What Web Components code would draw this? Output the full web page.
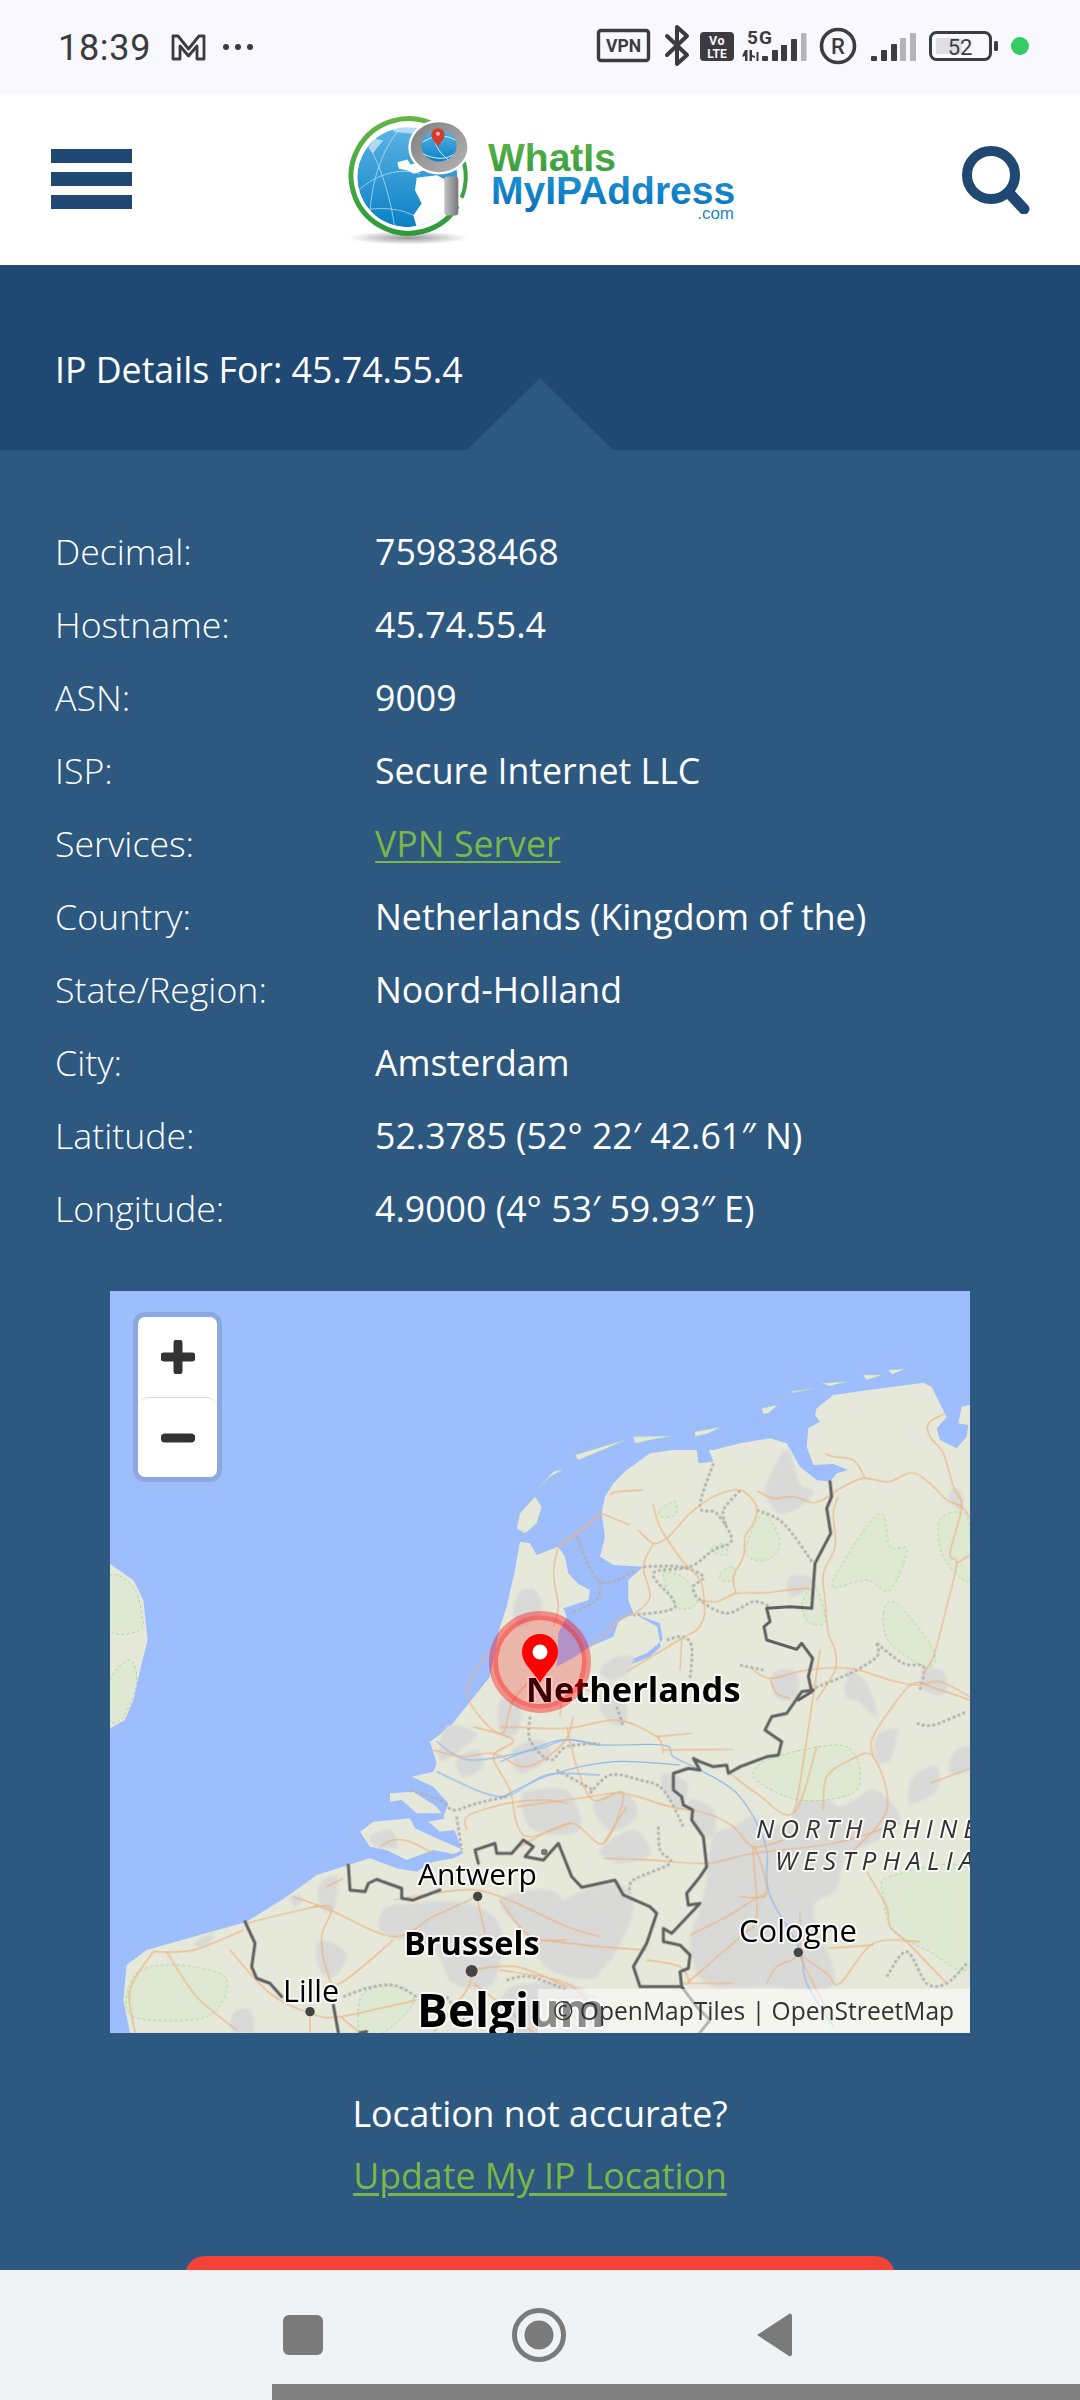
<!DOCTYPE html>
<html lang="en"><head><meta charset="utf-8"><title>IP Details</title>
<style>
html,body{margin:0;padding:0;width:1080px;height:2400px;overflow:hidden;background:#2d5880}
body{display:flex;flex-direction:column;font-family:"Open Sans",sans-serif}
ip-content{flex:1;min-height:0}
</style></head>
<body>
<status-bar></status-bar>
<site-header></site-header>
<ip-hero>IP Details For: 45.74.55.4</ip-hero>
<ip-content>
  <ip-row label="Decimal:">759838468</ip-row>
  <ip-row label="Hostname:">45.74.55.4</ip-row>
  <ip-row label="ASN:">9009</ip-row>
  <ip-row label="ISP:">Secure Internet LLC</ip-row>
  <ip-row label="Services:" link>VPN Server</ip-row>
  <ip-row label="Country:">Netherlands (Kingdom of the)</ip-row>
  <ip-row label="State/Region:">Noord-Holland</ip-row>
  <ip-row label="City:">Amsterdam</ip-row>
  <ip-row label="Latitude:">52.3785 (52° 22′ 42.61″ N)</ip-row>
  <ip-row label="Longitude:">4.9000 (4° 53′ 59.93″ E)</ip-row>
  <map-panel></map-panel>
  <location-note></location-note>
  <cta-peek></cta-peek>
</ip-content>
<nav-bar></nav-bar>

<script>
function def(name, html, init){
  customElements.define(name, class extends HTMLElement{
    constructor(){super();const r=this.attachShadow({mode:'open'});r.innerHTML=typeof html==='function'?html(this):html;}
    connectedCallback(){ if(init) init(this); }
  });
}
def('status-bar',`<style>
:host{display:flex;align-items:center;height:94px;background:#f8f8fe;color:#3c3c40;box-sizing:border-box;padding:0 51px 0 58px;flex:none}
.t{font:400 36px/1 Roboto,sans-serif;letter-spacing:.7px;margin-right:20px;position:relative;top:1px}
.sp{flex:1}
svg{display:block}
</style>
<span class="t">18:39</span>
<svg width="35" height="28" viewBox="0 0 35 28" style="margin-right:16px"><path d="M2 26V3h5l10.500 13L28 3h5v23h-7V13l-8.500 10L9 13v13z" fill="none" stroke="#3c3c40" stroke-width="2.800" stroke-linejoin="round"/></svg>
<svg width="32" height="10" viewBox="0 0 32 10"><circle cx="4" cy="5" r="3" fill="#3c3c40"/><circle cx="16" cy="5" r="3" fill="#3c3c40"/><circle cx="28" cy="5" r="3" fill="#3c3c40"/></svg>
<span class="sp"></span>
<svg width="439" height="70" viewBox="590 20 439 70" fill="#3c3c40">
 <rect x="598.500" y="38.500" width="50" height="30" rx="2.500" fill="none" stroke="#3c3c40" stroke-width="3.400"/>
 <text x="623.500" y="60" text-anchor="middle" font-family="Roboto,sans-serif" font-weight="700" font-size="17.500">VPN</text>
 <path d="M667 44l20 19-10 9V35l10 9-20 19" fill="none" stroke="#3c3c40" stroke-width="4" stroke-linejoin="round" stroke-linecap="round"/>
 <rect x="700" y="40" width="34" height="29" rx="4"/>
 <text x="717" y="53" text-anchor="middle" font-family="Roboto,sans-serif" font-weight="700" font-size="12.500" fill="#f8f8fe" letter-spacing=".5">Vo</text>
 <text x="717" y="66" text-anchor="middle" font-family="Roboto,sans-serif" font-weight="700" font-size="12" fill="#f8f8fe">LTE</text>
 <text x="760" y="52" text-anchor="middle" font-family="Roboto,sans-serif" font-weight="700" font-size="19" letter-spacing="1">5G</text>
 <path d="M745 58h2.500v11H745v-5l-2.500 1v-2zM749.500 58h2.500v5l3 1v2l-3-1v4h-2.500z M756.500 60h2v9h-2z"/>
 <rect x="762" y="64" width="6" height="5" rx="1"/><rect x="772" y="58" width="6" height="11" rx="1"/><rect x="781" y="53" width="6" height="16" rx="1"/><rect x="791" y="47" width="6" height="22" rx="1"/><rect x="801" y="41" width="5.500" height="28" rx="1" fill="#b4b4b8"/>
 <circle cx="838" cy="54" r="16.500" fill="none" stroke="#3c3c40" stroke-width="3.600"/>
 <text x="838" y="62" text-anchor="middle" font-family="Roboto,sans-serif" font-weight="500" font-size="22">R</text>
 <rect x="871" y="64" width="6" height="5" rx="1"/><rect x="881" y="58" width="6" height="11" rx="1"/><rect x="891" y="52" width="6" height="17" rx="1"/><rect x="900" y="46" width="6" height="23" rx="1" fill="#b4b4b8"/><rect x="910" y="41" width="6" height="28" rx="1" fill="#b4b4b8"/>
 <rect x="930.500" y="40.500" width="60" height="27" rx="6" fill="none" stroke="#3c3c40" stroke-width="3"/>
 <rect x="936" y="46" width="26" height="16" rx="2" fill="#dedee6"/>
 <rect x="994" y="49" width="4" height="10" rx="1.500"/>
 <text x="960" y="63" text-anchor="middle" font-family="Roboto,sans-serif" font-size="22">52</text>
 <circle cx="1020" cy="54" r="9" fill="#33cc66"/>
</svg>`);

def('site-header',`<style>
:host{display:grid;grid-template-columns:320px 440px 1fr;height:171px;background:#fff;flex:none;align-items:center}
.h{display:flex;flex-direction:column;gap:9px;padding-left:51px;margin-top:-1px}
.h i{display:block;width:81px;height:14px;background:#1f4873}
.s{justify-self:end;margin-right:50px;margin-top:1px}
svg{display:block}
</style>
<div class="h"><i></i><i></i><i></i></div>
<svg width="440" height="170" viewBox="0 4.500 440 170">
 <defs>
  <linearGradient id="gr" x1="0" y1="0" x2="0" y2="1"><stop offset="0" stop-color="#62b548"/><stop offset="1" stop-color="#2f9a3e"/></linearGradient>
  <linearGradient id="bl" x1="0" y1="0" x2="0" y2="1"><stop offset="0" stop-color="#1d9bd8"/><stop offset="1" stop-color="#0a6fba"/></linearGradient>
  <linearGradient id="gl" x1="0" y1="0" x2="0" y2="1"><stop offset="0" stop-color="#5cb4e4"/><stop offset="1" stop-color="#0a80c6"/></linearGradient>
  <linearGradient id="hd" x1="0" y1="0" x2="1" y2="0"><stop offset="0" stop-color="#c4c4c4"/><stop offset="1" stop-color="#777"/></linearGradient>
  <linearGradient id="mg" x1="0" y1="0" x2="1" y2="1"><stop offset="0" stop-color="#808080"/><stop offset="1" stop-color="#b4b4b4"/></linearGradient>
  <radialGradient id="sh"><stop offset="0" stop-color="#999"/><stop offset="1" stop-color="#fff"/></radialGradient>
  <clipPath id="gc"><circle cx="262" cy="260" r="150"/></clipPath>
 </defs>
 <g transform="scale(.33333)">
  <ellipse cx="265" cy="442" rx="180" ry="20" fill="url(#sh)"/>
  <path d="M345 104A172 172 0 1 0 412 346" fill="none" stroke="url(#gr)" stroke-width="15"/>
  <path d="M432 215A172 172 0 0 1 425 322" fill="none" stroke="#3ea344" stroke-width="12"/>
  <g clip-path="url(#gc)">
   <circle cx="262" cy="260" r="150" fill="url(#gl)"/>
   <path d="M205 108c40-8 70-4 90 10l-20 12-50-6zM145 170l20-25 25 4-18 22-14 18z" fill="#fff" opacity=".55"/>
   <path d="M232 215l30-8 10 15 25-6 25 20-40 14-20-10-25-5zM290 262l60-8 40 20 20 150-110 20-20-70 25-35-20-40z" fill="#fff"/>
   <path d="M115 300C170 250 240 230 300 250M155 180c30 60 60 150 70 240M235 120c-50 60-90 170-85 290M120 360c70-10 120-10 180 25" fill="none" stroke="#cfe9f7" stroke-width="2"/>
  </g>
  <ellipse cx="357" cy="170" rx="92" ry="82" fill="#fff"/>
  <ellipse cx="357" cy="170" rx="85" ry="75" fill="url(#mg)"/>
  <ellipse cx="357" cy="165" rx="53" ry="48" fill="url(#gl)"/>
  <path d="M308 155c30-20 70-25 98-6M310 190c30 15 65 20 90 2M345 120c-5 40 10 65 40 88" fill="none" stroke="#d8effa" stroke-width="3"/>
  <rect x="373" y="258" width="42" height="117" rx="9" fill="url(#hd)"/>
  <path d="M354 170c-6-13-20-24-20-37a20 20 0 0 1 40 0c0 13-14 24-20 37z" fill="#d63a2a"/><circle cx="354" cy="130" r="6" fill="#f2b8a8"/>
 </g>
 <text x="168" y="80" font-family="'Liberation Sans',sans-serif" font-weight="700" font-size="39" fill="url(#gr)">WhatIs</text>
 <text x="171" y="113" font-family="'Liberation Sans',sans-serif" font-weight="700" font-size="39" fill="url(#bl)">MyIPAddress</text>
 <text x="414" y="128" text-anchor="end" font-family="'Liberation Sans',sans-serif" font-size="17" fill="#1d86cc">.com</text>
</svg>
<svg class="s" width="68" height="68" viewBox="0 0 68 68"><circle cx="29" cy="29" r="24" fill="none" stroke="#1f4873" stroke-width="10"/><path d="M47 47l15 16" stroke="#1f4873" stroke-width="11" stroke-linecap="round"/></svg>`);

def('ip-hero',`<style>
:host{display:flex;align-items:center;position:relative;height:185px;box-sizing:border-box;padding:24px 55px 0;background:#1f4873;color:#fff;flex:none;font:400 35.7px/1.4 "Open Sans",sans-serif}
.tri{position:absolute;left:467px;bottom:0;width:0;height:0;border-left:73px solid transparent;border-right:73px solid transparent;border-bottom:72px solid #2d5880}
</style><slot></slot><span class="tri"></span>`);

def('ip-content',`<style>
:host{display:block;background:#2d5880;padding-top:65px;overflow:hidden}
</style><slot></slot>`);

def('ip-row',(el)=>`<style>
:host{display:grid;grid-template-columns:320px 1fr;height:73px;align-items:center;padding-left:55px;color:#fff;font:400 35.7px/1.4 "Open Sans",sans-serif}
.l{font-weight:300}
:host([link]) .v{color:#7ab648;text-decoration:underline;text-decoration-thickness:2px;text-underline-offset:4px}
</style><span class="l"></span><span class="v"><slot></slot></span>`,(el)=>{el.shadowRoot.querySelector('.l').textContent=el.getAttribute('label')});

const Z4='translate(1200,0)',Z5='translate(0,1110)',Z6='translate(1200,1110)';
function smooth(pts,closed){
  const n=pts.length,g=i=>closed?pts[(i+n)%n]:pts[Math.max(0,Math.min(n-1,i))];
  let d=`M${pts[0][0]} ${pts[0][1]}`;
  const m=closed?n:n-1;
  for(let i=0;i<m;i++){
    const p0=g(i-1),p1=g(i),p2=g(i+1),p3=g(i+2);
    d+=`C${(p1[0]+(p2[0]-p0[0])/6).toFixed(1)} ${(p1[1]+(p2[1]-p0[1])/6).toFixed(1)} ${(p2[0]-(p3[0]-p1[0])/6).toFixed(1)} ${(p2[1]-(p3[1]-p1[1])/6).toFixed(1)} ${p2[0]} ${p2[1]}`;
  }
  return d+(closed?'Z':'');
}
def('map-panel',`<style>
:host{display:block;position:relative;width:860px;height:742px;margin:46px 0 0 110px;overflow:hidden;background:#9ebdfd}
svg{display:block;position:absolute;inset:0}
.zoom{position:absolute;left:23px;top:21px;width:79px;height:160px;border:5px solid #8ba9e0;border-radius:12px;background:#fff;display:grid;grid-template-rows:80px 80px;overflow:hidden}
.zoom div{display:flex;align-items:center;justify-content:center;border-radius:10px}
.zoom div+div{border-top:1.5px solid #ddd;box-sizing:border-box}
.attr{position:absolute;right:0;bottom:0;width:432px;height:44px;box-sizing:border-box;background:rgba(255,255,255,.55);color:#333;font:400 24.6px/44px "Open Sans",sans-serif;padding-left:15px;white-space:nowrap}
text{font-family:"Open Sans",sans-serif;fill:#000;paint-order:stroke;stroke:rgba(255,255,255,.75);stroke-width:4px;stroke-linejoin:round}
</style>
<svg width="860" height="742" viewBox="110 1291 860 742">
<defs><filter id="soft" x="-5%" y="-5%" width="110%" height="110%"><feGaussianBlur stdDeviation="2.500"/></filter></defs>
<g transform="translate(100 1280) scale(.33333)">
 <!-- land -->
 <g fill="#e6e8da">
  <polygon points="2610,375 2585,380 2575,430 2605,435 2600,470 2570,505 2520,480 2510,445 2540,412 2495,320 2470,308 2290,332 2200,345 2150,385 2145,405 2160,425 2125,445 2120,500 2140,555 2200,552 2245,570 2210,580 2190,605 2150,600 2100,560 2060,490 2010,475 1920,490 1840,510 1720,510 1650,520 1580,570 1540,610 1515,650 1505,700 1375,800 1310,825 1290,790 1260,785 1245,870 1220,980 1200,1040 1170,1190 1050,1340 990,1385 1010,1450 1000,1475 935,1490 1000,1520 1045,1570 1030,1610 1065,1655 1090,1720 1060,1735 1000,1745 950,1775 890,1765 810,1735 745,1755 650,1785 560,1850 440,1925 280,1970 140,2010 80,2055 70,2160 90,2258 2610,2258"/>
  <polygon points="30,852 100,900 130,960 143,1080 125,1150 100,1260 75,1320 30,1345"/>
  <g transform="${Z4}" stroke="#a5dc9a" stroke-width="2" stroke-dasharray="7 6">
   <polygon points="105,650 125,680 110,730 75,760 50,745 60,700"/>
   <polygon points="190,568 160,575 115,625 150,590"/>
   <polygon points="375,480 225,525 235,540 320,505"/>
   <polygon points="400,470 515,468 450,480 405,490"/>
   <polygon points="585,455 660,442 625,460 585,470"/>
   <polygon points="785,385 833,375 805,400 790,402"/>
   <polygon points="870,335 940,325 880,338"/>
   <polygon points="965,310 1038,305 990,318"/>
   <polygon points="1090,285 1145,285 1100,300"/>
   <polygon points="1165,270 1215,268 1175,283"/>
  </g>
  <g transform="${Z5}">
   <polygon points="780,545 820,515 930,505 945,535 1000,560 1090,600 1060,612 1000,600 920,630 860,600 810,590"/>
   <polygon points="870,430 940,425 1010,470 1025,490 950,490 905,450 870,455"/>
   <polygon points="985,515 1040,505 1065,540 1020,545"/>
  </g>
 </g>
 <!-- inland water -->
 <g transform="${Z4}" fill="#9ebdfd">
  <polygon points="305,700 175,800 195,830 205,880 235,912 270,930 265,960 190,985 200,1010 175,1060 170,1160 225,1130 270,1100 340,1070 355,1025 400,1000 385,960 385,900 430,860 340,855 300,830 315,770"/>
  <polygon points="405,1002 480,1030 488,1080 440,1120 365,1150 362,1180 375,1160 450,1130 482,1100 472,1040"/>
  <polygon points="590,510 625,505 640,545 595,550"/>
 </g>
 <!-- urban -->
 <g fill="#d9d9d7" class="s" filter="url(#soft)">
  <g transform="${Z4}">
   <polygon points="40,990 60,935 105,930 125,995 60,1040"/>
   <polygon points="800,610 860,510 900,610 940,635 900,680 840,700 800,650"/>
   <polygon points="860,920 875,888 930,890 930,920 880,950"/>
   <polygon points="1345,650 1370,625 1390,660 1380,690"/>
   <polygon points="820,1180 885,1175 890,1250 830,1255"/>
   <polygon points="300,1170 340,1135 400,1130 380,1180 330,1200"/>
   <polygon points="1035,1215 1080,1190 1100,1250 1050,1260"/>
   <polygon points="1270,1170 1330,1175 1335,1240 1270,1230"/>
  </g>
  <g transform="${Z5}">
   <polygon points="660,700 710,680 700,780 660,770"/>
   <polygon points="850,780 940,760 1100,760 1200,830 1180,1000 1060,1000 1000,900 850,850"/>
   <polygon points="280,880 340,850 320,890"/>
   <polygon points="1270,430 1400,430 1440,540 1300,540"/>
   <polygon points="1200,750 1350,720 1420,800 1500,850 1490,980 1350,960 1280,860"/>
   <polygon points="1040,230 1130,250 1080,300 1020,330"/>
   <polygon points="1240,300 1320,270 1350,320 1260,370"/>
   <polygon points="810,560 870,540 890,590 830,590"/>
   <polygon points="1070,330 1130,300 1150,350 1090,380"/>
   <polygon points="400,1090 450,1080 460,1148 400,1148"/>
   <polygon points="650,880 700,880 740,920 700,980 660,960"/>
   <polygon points="1220,1020 1400,1000 1500,1060 1500,1148 1240,1148"/>
   <polygon points="570,740 610,740 590,770"/>
  </g>
  <g transform="${Z6}">
   <polygon points="620,690 640,560 700,530 760,500 860,520 920,400 1020,470 1120,420 1200,500 1150,560 1040,620 1010,720 940,780 1000,1000 800,1010 620,1000 570,880 600,780"/>
   <polygon points="300,600 400,540 450,610 360,640"/>
   <polygon points="80,440 200,420 230,530 100,520"/>
   <polygon points="280,460 380,430 410,500 330,540"/>
   <polygon points="180,760 340,700 400,780 300,960 200,830"/>
   <polygon points="490,370 560,400 540,480 490,420"/>
   <polygon points="1130,260 1190,240 1170,330 1130,330"/>
   <polygon points="1240,380 1310,350 1310,420 1230,460"/>
   <polygon points="1360,310 1410,290 1410,360 1350,370"/>
   <polygon points="570,450 640,480 640,560 580,530"/>
   <polygon points="830,70 890,70 885,145 825,130"/>
   <polygon points="1040,60 1100,100 1130,200 1060,130"/>
   <polygon points="0,150 60,170 50,250 0,250"/>
   <polygon points="320,100 380,170 360,230 300,180"/>
  </g>
 </g>
 <!-- forests -->
 <g fill="#dfe8d2" stroke="#a5dc9a" stroke-width="3" stroke-dasharray="9 7" class="s">
  <g transform="${Z4}">
   <polygon points="740,790 790,700 840,790 800,840 745,830"/>
   <polygon points="1000,920 1040,830 1140,700 1170,800 1220,810 1170,930 1100,900"/>
   <polygon points="1150,1000 1190,970 1300,1110 1280,1160 1170,1090"/>
   <polygon points="1320,720 1400,710 1410,900 1330,830"/>
   <polygon points="480,690 525,665 525,705 485,710"/>
   <polygon points="490,880 560,900 590,970 530,980"/>
   <polygon points="660,880 700,860 700,900 665,900"/>
   <polygon points="630,810 670,790 680,825"/>
   <polygon points="905,975 945,920 975,1020 930,1030"/>
  </g>
  <g transform="${Z5}">
   <polygon points="100,1100 90,1000 150,950 280,950 380,990 320,1100"/>
   <polygon points="780,1148 790,1030 900,1010 940,1060 850,1148"/>
  </g>
  <g transform="${Z6}">
   <polygon points="1170,680 1410,660 1410,950 1280,900 1180,840 1150,740"/>
   <polygon points="830,320 1040,290 1070,420 900,450 760,380"/>
  </g>
  <polygon points="30,890 100,920 125,1000 120,1050 30,1050"/>
  <polygon points="30,1200 90,1140 110,1210 70,1310 30,1320"/>
 </g>
 <!-- rivers -->
 <g transform="${Z6}" fill="none" stroke="#8fb8ee" stroke-width="3.500" class="s">
  <polyline points="0,335 180,270 300,285 490,285 520,320 600,360 700,420 760,500 800,600 800,690 820,760 900,900 920,1000 1000,1130"/>
  <polyline points="0,445 150,375 340,335 540,345"/>
 </g>
 <g transform="${Z5}" fill="none" stroke="#8fb8ee" stroke-width="3.500" class="s">
  <polyline points="1010,275 1110,330 1300,300 1400,270 1500,285"/>
  <polyline points="1010,365 1200,440 1340,375 1500,375"/>
 </g>
 <!-- regional dotted boundaries -->
 <g fill="none" stroke="#aeb0ae" stroke-width="8" stroke-dasharray="9 7" class="s">
  <g transform="${Z4}">
   <polyline points="640,550 600,680 650,700 695,780 640,810 570,860 460,880 520,960 510,990 400,1005"/>
   <polyline points="720,632 670,690 680,740"/>
   <polyline points="770,690 850,730 940,850"/>
   <polyline points="230,770 300,905 410,870"/>
   <polyline points="300,905 290,960 210,1000"/>
   <polyline points="430,860 540,860 610,890 580,920 600,960 680,1000 760,965 810,980"/>
   <polyline points="500,1080 545,1070 575,1100 570,1200"/>
   <polyline points="1130,1090 1130,1130 1050,1180 940,1225"/>
   <polyline points="1130,1090 1210,1150 1270,1160 1260,1230"/>
   <polyline points="720,1155 790,1170"/>
  </g>
  <g transform="${Z6}">
   <polyline points="270,430 330,375 420,390 490,420 550,530"/>
   <polyline points="475,530 480,600 510,640 400,690 390,730"/>
   <polyline points="1250,220 1300,225 1400,185"/>
   <polyline points="1160,980 1220,905 1280,1000 1340,1000 1400,940"/>
   <polyline points="350,170 370,230"/>
  </g>
  <g transform="${Z5}">
   <polyline points="1290,200 1290,270 1350,330 1400,290 1500,280"/>
   <polyline points="1370,360 1480,420"/>
   <polyline points="930,420 1020,450 1060,480 1130,460 1220,440"/>
   <polyline points="1070,500 1085,600"/>
   <polyline points="730,1040 800,1015 880,1005 950,1040"/>
   <polyline points="1040,1040 1100,1120"/>
   <polyline points="1220,990 1290,980 1400,1020"/>
  </g>
 </g>
 <!-- roads -->
 <g fill="none" stroke="#ebb482" stroke-width="3.500" stroke-linejoin="round" class="s">
  <g transform="${Z4}">
   <polyline points="330,645 350,635 430,630"/>
   <polyline points="305,700 390,735"/>
   <polyline points="175,800 230,760 305,700" stroke-width="5"/>
   <polyline points="458,670 475,730 500,775 545,840 600,900 612,960 612,1010 590,1050 545,1075 380,1175"/>
   <polyline points="415,750 460,790 500,775 525,750 570,700 640,650 720,630 770,680 760,730 735,770 730,830 700,890 708,940"/>
   <polyline points="460,790 430,860 450,950 405,1000 365,1015 270,1100"/>
   <polyline points="600,960 650,965 710,940 800,938 860,930 930,925"/>
   <polyline points="175,800 160,880 175,980 160,1040"/>
   <polyline points="770,632 820,655 880,650 940,668 985,650 1020,625 1090,595 1165,605 1235,578 1290,610 1340,660 1385,680 1410,715"/>
   <polyline points="975,520 1000,530 1060,540 1095,595"/>
   <polyline points="1015,650 1000,700 1005,800 970,880 975,960 985,1060 1005,1110 1005,1170 950,1260"/>
   <polyline points="1335,400 1285,430 1290,470 1330,520 1360,620 1385,680 1350,820 1370,850 1340,980 1300,1130 1270,1180"/>
   <polyline points="1370,850 1410,825"/>
   <polyline points="755,1165 810,1195 920,1170 1050,1165 1170,1200 1250,1215 1320,1205 1410,1250"/>
   <polyline points="545,1075 540,1170"/>
   <polyline points="810,1195 830,1240 870,1255"/>
  </g>
  <g transform="${Z6}">
   <polyline points="0,230 200,235 350,210 470,260 490,310"/>
   <polyline points="470,260 575,250"/>
   <polyline points="490,300 700,298"/>
   <polyline points="50,470 270,440 370,430 510,470 620,490 700,530 760,590 850,570"/>
   <polyline points="310,625 450,630 620,640 760,610 1000,580 1200,520"/>
   <polyline points="570,855 680,800 775,740 800,730"/>
   <polyline points="690,370 770,430 880,490 950,290"/>
   <polyline points="880,490 900,400 960,0"/>
   <polyline points="970,480 980,380 1050,330 1120,320 1160,480 1040,620"/>
   <polyline points="1120,320 1115,270 1170,180 1240,100 1320,120 1410,150"/>
   <polyline points="1290,400 1410,355"/>
   <polyline points="60,590 210,520 310,580 370,430 280,450 230,350 200,230"/>
   <polyline points="200,870 90,860 0,750"/>
   <polyline points="310,580 380,470"/>
   <polyline points="720,740 800,730 760,590 770,800 720,860 560,1000"/>
   <polyline points="900,790 895,910 830,950 800,1000"/>
   <polyline points="895,910 980,970 1020,1000 1120,880 1260,875"/>
   <polyline points="1100,665 1160,770 1170,830 1225,880 1340,1000"/>
   <polyline points="980,895 1120,885"/>
   <polyline points="895,910 990,1100"/>
   <polyline points="540,1000 700,1000"/>
   <polyline points="440,930 540,950 570,1000"/>
   <polyline points="0,960 200,1000 300,1100"/>
   <polyline points="120,870 300,890 440,900"/>
  </g>
  <g transform="${Z5}">
   <polyline points="1120,230 1240,270 1180,320 1230,420 1250,520 1290,560 1410,520"/>
   <polyline points="1000,300 1090,320 1180,310 1280,350 1390,280 1420,200"/>
   <polyline points="1100,540 1100,500 1180,470 1250,455 1340,450 1400,460"/>
   <polyline points="880,750 1000,730 1130,720 1250,760 1400,830 1500,860"/>
   <polyline points="580,740 690,780 880,860 1000,800 1130,740"/>
   <polyline points="680,710 730,685"/>
   <polyline points="440,820 560,790 690,770 665,860 680,960 720,1000 880,870"/>
   <polyline points="160,905 280,900 430,840"/>
   <polyline points="390,900 510,1030 630,1090 720,1100 950,1050"/>
   <polyline points="160,905 90,1020 105,1148"/>
   <polyline points="200,905 290,1040 410,1140"/>
   <polyline points="1130,740 1155,850"/>
   <polyline points="1115,960 1250,950 1400,1010"/>
   <polyline points="1120,1000 1200,1060 1300,1148"/>
   <polyline points="840,590 880,570 930,575 1000,610"/>
   <polyline points="1000,1148 1100,1020 1115,960"/>
   <polyline points="630,1090 630,1148"/>
   <polyline points="720,1100 780,1148"/>
   <polyline points="1380,200 1400,100 1500,140"/>
   <polyline points="1170,0 1100,130 1200,250 1240,150 1320,60"/>
  </g>
 </g>
 <!-- national borders -->
 <g fill="none" stroke="#606060" stroke-width="9" stroke-linejoin="round" stroke-linecap="round">
  <polyline transform="${Z4}" points="990,605 995,650 980,685 992,760 945,850 935,985 870,980 800,985 810,1025 792,1040 800,1080 890,1108 905,1090 938,1135 925,1190 935,1235 895,1260"/>
  <polyline transform="${Z6}" points="940,120 905,125 860,190 815,200 795,240 845,275 835,315 800,320 720,350 685,370 680,345 640,350 600,335 580,325 600,360 565,355 520,370 520,420 545,440 550,465 578,480 575,510 610,560 620,650 600,680 560,730 565,765 600,760 515,850 490,835 490,875 540,885 570,915 565,955 540,965 545,1010 450,1010 420,1010 400,950 440,880 470,790 450,770 370,735 345,690 245,712 215,680 175,580 130,630 75,620 100,590 70,570 35,610 -10,610 -15,580 -75,600 -65,640"/>
  <polyline transform="${Z5}" points="1020,720 940,750 905,745 905,715 830,688 805,700 795,725 750,720 745,645"/>
  <polyline transform="${Z5}" points="435,815 465,880 455,950 470,985 510,1000 545,1040"/>
  <polyline transform="${Z5}" points="700,1065 715,1148"/>
  <polyline transform="${Z6}" points="545,1010 590,1070 630,1110 600,1148"/>
  <polyline transform="${Z5}" points="780,1148 800,1145"/>
 </g>
 <!-- city dots -->
 <g fill="#444">
  <circle cx="1133" cy="1849" r="14"/><circle cx="1115" cy="2073" r="18"/><circle cx="630" cy="2195" r="14"/><circle cx="2095" cy="2017" r="14"/>
  <circle cx="1333" cy="1716" r="10" fill="#777"/>
 </g>
</g>
<text x="526" y="1702" font-size="34.400" font-weight="700">Netherlands</text>
<text x="418" y="1885" font-size="30">Antwerp</text>
<text x="404" y="1955" font-size="32.500" font-weight="700">Brussels</text>
<text x="283" y="2002" font-size="30.500">Lille</text>
<text x="417" y="2027" font-size="46" font-weight="700">Belgium</text>
<text x="739" y="1942" font-size="31">Cologne</text>
<text x="756" y="1838" font-size="26" font-style="italic" letter-spacing="6" style="fill:#333">NORTH RHINE</text>
<text x="775" y="1870" font-size="26" font-style="italic" letter-spacing="6.200" style="fill:#333">WESTPHALIA</text>
<!-- marker -->
<circle cx="540" cy="1662" r="46.500" fill="rgba(255,0,0,.22)" stroke="rgba(255,0,0,.38)" stroke-width="9"/>
<path d="M540 1683c-5-10-18-19-18-31a18 18 0 0 1 36 0c0 12-13 21-18 31z" fill="#f00"/>
<circle cx="540" cy="1652" r="7.500" fill="#fff"/>
</svg>
<div class="zoom">
 <div><svg style="position:static" width="34" height="34" viewBox="0 0 34 34"><path d="M17 3v28M3 17h28" stroke="#333" stroke-width="9" stroke-linecap="round"/></svg></div>
 <div><svg style="position:static" width="34" height="10" viewBox="0 0 34 10"><path d="M4 5h26" stroke="#333" stroke-width="9" stroke-linecap="round"/></svg></div>
</div>
<div class="attr">© OpenMapTiles | OpenStreetMap</div>`,(el)=>{
  const NS='http://www.w3.org/2000/svg';
  el.shadowRoot.querySelectorAll('.s polyline,.s polygon').forEach(p=>{
    const pts=p.getAttribute('points').trim().split(/\s+/).map(s=>s.split(',').map(Number));
    const q=document.createElementNS(NS,'path');
    q.setAttribute('d',smooth(pts,p.tagName==='polygon'));
    if(p.getAttribute('stroke-width'))q.setAttribute('stroke-width',p.getAttribute('stroke-width'));
    p.replaceWith(q);
  });
});

def('location-note',`<style>
:host{display:flex;flex-direction:column;align-items:center;color:#fff;font:400 35.7px/62px "Open Sans",sans-serif;padding-top:49px}
a{color:#7ab648;text-decoration:underline;text-decoration-thickness:3px;text-underline-offset:4px}
</style><span>Location not accurate?</span><a>Update My IP Location</a>`);

def('cta-peek',`<style>
:host{display:block;width:710px;height:40px;margin:50px 0 0 185px;background:#f44336;border-radius:20px 20px 0 0}
</style>`);

def('nav-bar',`<style>
:host{display:block;position:relative;height:130px;background:#f1f2f4;flex:none}
.b{display:flex;align-items:center;height:130px;box-sizing:border-box;padding:0 0 0 283px;gap:189px}
.bar{position:absolute;left:272px;right:0;bottom:0;height:16px;background:#808080}
svg{display:block}
</style>
<div class="b">
<svg width="40" height="40" viewBox="0 0 40 40"><rect width="40" height="40" rx="6" fill="#7a7a7a"/></svg>
<svg width="54" height="54" viewBox="0 0 54 54"><circle cx="27" cy="27" r="24.500" fill="none" stroke="#7a7a7a" stroke-width="5"/><circle cx="27" cy="27" r="14.500" fill="#7a7a7a"/></svg>
<svg width="37" height="46" viewBox="0 0 37 46"><path d="M34 2L2 23l32 21c1 .5 3 0 3-2V4c0-2-2-3-3-2z" fill="#7a7a7a"/></svg>
</div>
<div class="bar"></div>`);
</script>
</body></html>
